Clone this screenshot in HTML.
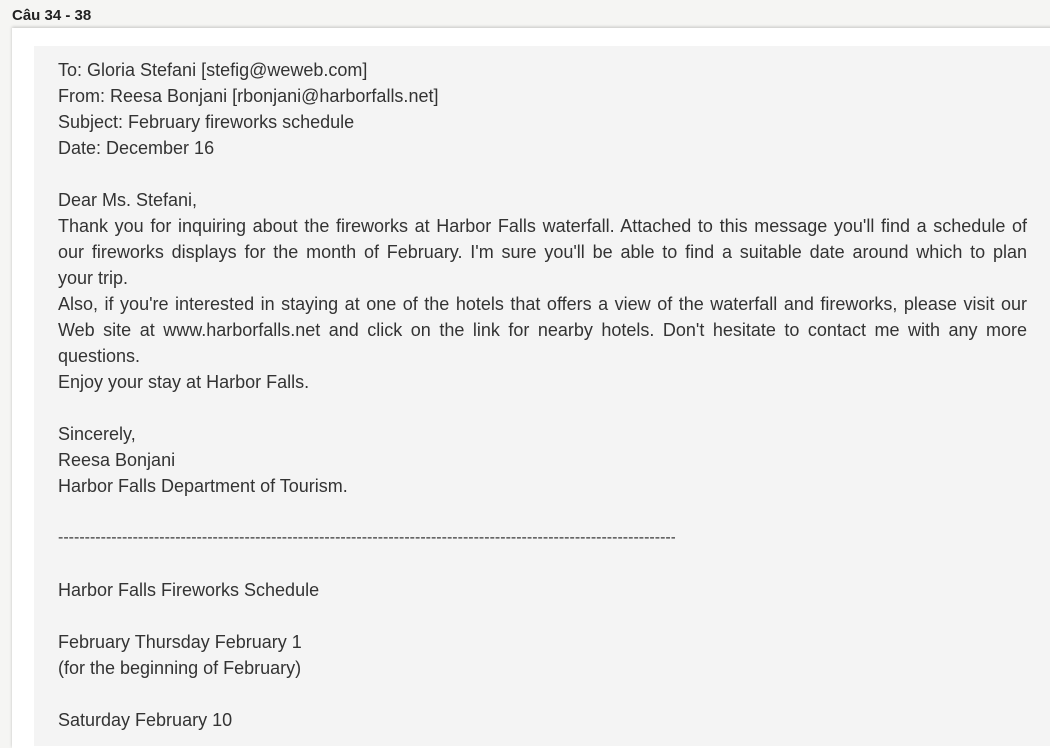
<!DOCTYPE html>
<html><head><meta charset="utf-8"><style>
html,body{margin:0;padding:0;width:1050px;height:740px;overflow:hidden;background:#f5f5f3;font-family:"Liberation Sans",Arial,sans-serif;}
.hdr{position:absolute;left:12px;top:7px;font-size:15px;font-weight:bold;color:#222;}
.card{position:absolute;left:12px;top:28px;width:1050px;height:720px;background:#fff;box-shadow:0 -1px 3px rgba(0,0,0,.2);}
.inner{position:absolute;left:34px;top:46px;width:1030px;height:700px;background:#f4f4f4;}
.txt{position:absolute;left:58px;top:57px;width:969px;font-size:18px;line-height:26px;color:#333;}
.l{height:26px;white-space:nowrap;}
.j{text-align:justify;text-align-last:justify;}
.dash{overflow:hidden;width:617px;font-size:16px;}
</style></head><body>
<div class="hdr">Câu 34 - 38</div>
<div class="card"></div>
<div class="inner"></div>
<div class="txt">
<div class="l">To: Gloria Stefani [stefig@weweb.com]</div>
<div class="l">From: Reesa Bonjani [rbonjani@harborfalls.net]</div>
<div class="l">Subject: February fireworks schedule</div>
<div class="l">Date: December 16</div>
<div class="l"></div>
<div class="l">Dear Ms. Stefani,</div>
<div class="l j">Thank you for inquiring about the fireworks at Harbor Falls waterfall. Attached to this message you'll find a schedule of</div>
<div class="l j">our fireworks displays for the month of February. I'm sure you'll be able to find a suitable date around which to plan</div>
<div class="l">your trip.</div>
<div class="l j">Also, if you're interested in staying at one of the hotels that offers a view of the waterfall and fireworks, please visit our</div>
<div class="l j">Web site at www.harborfalls.net and click on the link for nearby hotels. Don't hesitate to contact me with any more</div>
<div class="l">questions.</div>
<div class="l">Enjoy your stay at Harbor Falls.</div>
<div class="l"></div>
<div class="l">Sincerely,</div>
<div class="l">Reesa Bonjani</div>
<div class="l">Harbor Falls Department of Tourism.</div>
<div class="l"></div>
<div class="l dash">------------------------------------------------------------------------------------------------------------------------------------------------------</div>
<div class="l"></div>
<div class="l">Harbor Falls Fireworks Schedule</div>
<div class="l"></div>
<div class="l">February Thursday February 1</div>
<div class="l">(for the beginning of February)</div>
<div class="l"></div>
<div class="l">Saturday February 10</div>
</div>
</body></html>
